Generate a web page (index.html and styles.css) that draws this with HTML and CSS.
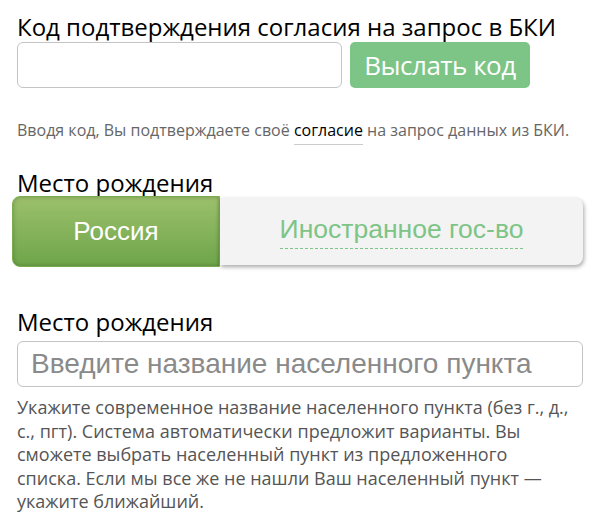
FILE: index.html
```html
<!DOCTYPE html>
<html lang="ru">
<head>
  <meta charset="UTF-8" />
  <meta name="viewport" content="width=device-width, initial-scale=1" />
  <title>Анкета</title>
  <link rel="stylesheet" href="styles.css">
</head>
<body>

  <div class="form">
    <label class="label first" for="codeInput">Код подтверждения согласия на запрос в БКИ</label>
    <div class="code-row">
      <input type="text" id="codeInput" class="field code-field" />
      <button class="send-btn">Выслать код</button>
    </div>
    <p class="note">Вводя код, Вы подтверждаете своё <span class="agree">согласие</span> на запрос данных из БКИ.</p>

    <div class="label second">Место рождения</div>
    <div class="toggle">
      <div class="toggle-item active">Россия</div>
      <div class="toggle-item"><span class="dashed">Иностранное гос-во</span></div>
    </div>

    <label class="label third" for="placeInput">Место рождения</label>
    <input type="text" id="placeInput" class="field place-field" placeholder="Введите название населенного пункта" />
    <p class="hint">Укажите современное название населенного пункта (без г., д.,<br>с., пгт). Система автоматически предложит варианты. Вы<br>сможете выбрать населенный пункт из предложенного<br>списка. Если мы все же не нашли Ваш населенный пункт —<br>укажите ближайший.</p>
  </div>

</body>
</html>
```

FILE: styles.css
```css
body {
  margin: 0;
  background: #fff;
  color: #000;
  font-family: 'Open Sans', sans-serif;
}

.form {
  padding: 12px 17px 0 17px;
  width: 566px;
}

.label {
  display: block;
  font-size: 24px;
  line-height: 30px;
}

.code-row {
  display: flex;
  gap: 8px;
}

.field {
  box-sizing: border-box;
  height: 46px;
  border: 1px solid #c4c4c4;
  border-radius: 6px;
  background: #fff;
  outline: none;
}

.code-field {
  width: 325px;
}

.send-btn {
  width: 180px;
  height: 46px;
  border: none;
  border-radius: 5px;
  background: #7dc487;
  color: #fff;
  font-family: 'Open Sans', sans-serif;
  font-size: 26px;
  letter-spacing: -0.5px;
  padding: 0;
}

.note {
  margin: 32px 0 0;
  font-size: 16px;
  line-height: 20px;
  color: #666;
}

.agree {
  color: #000;
  border-bottom: 1px solid #ccc;
  padding-bottom: 3px;
}

.label.second {
  margin-top: 28px;
}

.toggle {
  display: flex;
  margin: -2px 0 0 -5px;
  height: 71px;
  align-items: center;
}

.toggle-item {
  display: flex;
  align-items: center;
  justify-content: center;
  font-family: 'Liberation Sans', Arial, sans-serif;
  font-size: 26.5px;
}

.toggle-item.active {
  width: 206px;
  height: 69px;
  border: 1px solid #7aae4c;
  border-radius: 8px 0 0 8px;
  background: linear-gradient(#9cc06c, #6ea54a);
  color: #fff;
  font-size: 26px;
  box-shadow: inset 0 0 4px rgba(0, 0, 0, 0.25);
}

.toggle-item:not(.active) {
  flex: 1;
  height: 67px;
  border-radius: 0 8px 8px 0;
  background: #f3f3f3;
  box-shadow: 1px 2px 4px rgba(0, 0, 0, 0.35);
  color: #7dc487;
}

.dashed {
  border-bottom: 1px dashed #7dc487;
  padding-bottom: 3px;
}

.label.third {
  margin-top: 40px;
}

.place-field {
  width: 566px;
  height: 46px;
  margin-top: 4px;
  padding: 0 13px;
  font-family: 'Liberation Sans', Arial, sans-serif;
  font-size: 28px;
}

.place-field::placeholder {
  color: #8a8a8a;
}

.hint {
  margin: 9px 0 0;
  font-size: 18px;
  line-height: 23.5px;
  color: #555;
}
```
